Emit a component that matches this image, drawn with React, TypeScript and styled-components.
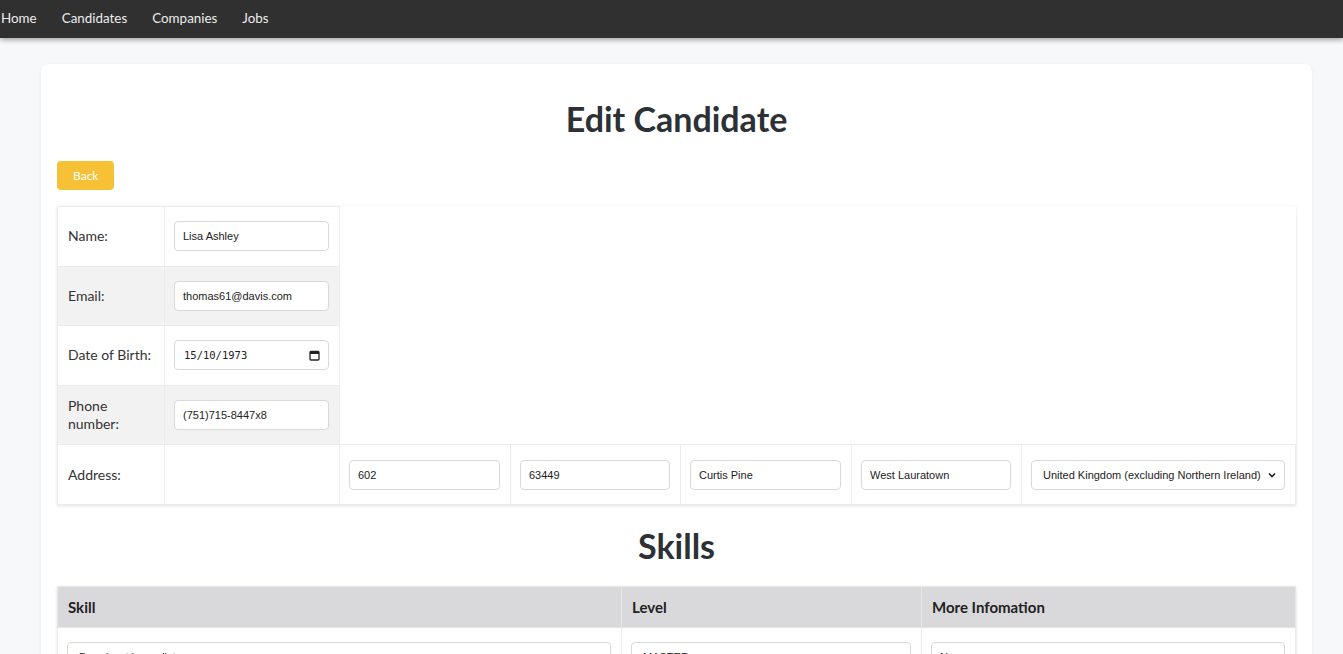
import React from "react";
import styled, { createGlobalStyle } from "styled-components";

const Global = createGlobalStyle`
  html, body { margin: 0; padding: 0; }
  body {
    background: #f7f8fa;
    font-family: Lato, "Open Sans", sans-serif;
    color: #333;
    overflow: hidden;
  }
  * { box-sizing: border-box; }
`;

const Nav = styled.nav`
  height: 38px;
  background: #303030;
  display: flex;
  align-items: center;
  gap: 25px;
  padding: 0 0 3px 1px;
  box-shadow: 0 2px 5px rgba(0, 0, 0, 0.35);
  position: relative;
  z-index: 1;
`;

const NavLink = styled.a`
  color: #ececec;
  font-size: 13.4px;
  text-decoration: none;
`;

const Card = styled.main`
  margin: 26px 31px 0 41px;
  background: #fff;
  border-radius: 8px;
  box-shadow: 0 1px 4px rgba(0, 0, 0, 0.05);
  padding: 16px 16px 40px;
`;

const Title = styled.h1`
  margin: 18px 0 22px;
  text-align: center;
  font-size: 34px;
  line-height: 41px;
  font-weight: 700;
  color: #2c3136;
`;

const BackButton = styled.button`
  height: 29px;
  padding: 0 16px;
  border: none;
  border-radius: 4px;
  background: #f7c136;
  color: #fff;
  font-family: Lato, sans-serif;
  font-size: 12px;
  cursor: pointer;
  margin-bottom: 16px;
`;

const Table = styled.table`
  width: 100%;
  table-layout: fixed;
  border-collapse: collapse;
  background: #fff;
  box-shadow: 0 1px 3px rgba(0, 0, 0, 0.12);
`;

const Row = styled.tr<{ $shade?: boolean }>`
  & > td {
    background: ${(p) => (p.$shade ? "#f2f2f2" : "#fff")};
  }
`;

const Cell = styled.td`
  border: 1px solid #ececec;
  padding: 11.3px 10px;
  font-size: 14px;
  line-height: 18px;
  color: #333;
  vertical-align: middle;
`;

const FieldCell = styled(Cell)`
  padding-left: 9px;
`;

const HeadCell = styled.th`
  background: #d9d9db;
  border: 1px solid #e6e6e6;
  padding: 0 10px;
  height: 41px;
  text-align: left;
  font-size: 15px;
  font-weight: 700;
  color: #222;
`;

const Input = styled.input`
  display: block;
  width: 100%;
  height: 30px;
  margin: 3px 0;
  border: 1px solid #d9d9d9;
  border-radius: 4px;
  padding: 0 8px;
  font-family: "Liberation Sans", Arial, sans-serif;
  font-size: 11px;
  color: #222;
  background: #fff;
  outline: none;
`;

const DateField = styled.div`
  width: 100%;
  height: 30px;
  margin: 3px 0;
  border: 1px solid #d9d9d9;
  border-radius: 4px;
  padding: 0 8px 0 9px;
  display: flex;
  align-items: center;
  justify-content: space-between;
  background: #fff;
`;

const DateText = styled.input`
  border: none;
  outline: none;
  padding: 0;
  width: 90px;
  font-family: "DejaVu Sans Mono", "Liberation Mono", monospace;
  font-size: 10.5px;
  color: #222;
  background: transparent;
`;

const SelectWrap = styled.div`
  position: relative;
  width: 100%;
  margin: 3px 0;
`;

const Select = styled.select`
  display: block;
  width: 100%;
  height: 30px;
  border: 1px solid #d9d9d9;
  border-radius: 4px;
  padding: 0 22px 0 11px;
  font-family: "Liberation Sans", Arial, sans-serif;
  font-size: 11px;
  color: #222;
  background: #fff;
  appearance: none;
  outline: none;
`;

const Chevron = styled.svg`
  position: absolute;
  right: 8px;
  top: 50%;
  transform: translateY(-50%);
  pointer-events: none;
`;

const SectionTitle = styled.h2`
  margin: 20px 0 20px;
  text-align: center;
  font-size: 34px;
  line-height: 41px;
  font-weight: 700;
  color: #2c3136;
`;

const ChevronIcon = () => (
  <Chevron width="10" height="10" viewBox="0 0 10 10">
    <path d="M2 3.5 L5 6.5 L8 3.5" fill="none" stroke="#222" strokeWidth="1.6" />
  </Chevron>
);

const CalendarIcon = () => (
  <svg width="11" height="11" viewBox="0 0 11 11">
    <rect x="1" y="1.5" width="9" height="8.5" rx="1" fill="none" stroke="#222" strokeWidth="1.3" />
    <rect x="1" y="1.5" width="9" height="2.5" fill="#222" />
  </svg>
);

const Dropdown = ({ value }: { value: string }) => (
  <SelectWrap>
    <Select defaultValue={value}>
      <option>{value}</option>
    </Select>
    <ChevronIcon />
  </SelectWrap>
);

export default function App() {
  return (
    <>
      <Global />
      <Nav>
        <NavLink href="#">Home</NavLink>
        <NavLink href="#">Candidates</NavLink>
        <NavLink href="#">Companies</NavLink>
        <NavLink href="#">Jobs</NavLink>
      </Nav>
      <Card>
        <Title>Edit Candidate</Title>
        <BackButton>Back</BackButton>
        <Table>
          <colgroup>
            <col style={{ width: 107 }} />
            <col style={{ width: 175 }} />
            <col style={{ width: 171 }} />
            <col style={{ width: 170 }} />
            <col style={{ width: 171 }} />
            <col style={{ width: 170 }} />
            <col />
          </colgroup>
          <tbody>
            <Row>
              <Cell>Name:</Cell>
              <FieldCell><Input defaultValue="Lisa Ashley" /></FieldCell>
            </Row>
            <Row $shade>
              <Cell>Email:</Cell>
              <FieldCell><Input defaultValue="thomas61@davis.com" /></FieldCell>
            </Row>
            <Row>
              <Cell>Date of Birth:</Cell>
              <FieldCell>
                <DateField>
                  <DateText defaultValue="15/10/1973" />
                  <CalendarIcon />
                </DateField>
              </FieldCell>
            </Row>
            <Row $shade>
              <Cell>Phone number:</Cell>
              <FieldCell><Input defaultValue="(751)715-8447x8" /></FieldCell>
            </Row>
            <Row>
              <Cell>Address:</Cell>
              <Cell />
              <FieldCell><Input defaultValue="602" /></FieldCell>
              <FieldCell><Input defaultValue="63449" /></FieldCell>
              <FieldCell><Input defaultValue="Curtis Pine" /></FieldCell>
              <FieldCell><Input defaultValue="West Lauratown" /></FieldCell>
              <FieldCell><Dropdown value="United Kingdom (excluding Northern Ireland)" /></FieldCell>
            </Row>
          </tbody>
        </Table>
        <SectionTitle>Skills</SectionTitle>
        <Table>
          <colgroup>
            <col style={{ width: 564 }} />
            <col style={{ width: 300 }} />
            <col />
          </colgroup>
          <thead>
            <tr>
              <HeadCell>Skill</HeadCell>
              <HeadCell>Level</HeadCell>
              <HeadCell>More Infomation</HeadCell>
            </tr>
          </thead>
          <tbody>
            <Row>
              <FieldCell><Dropdown value="Broadcast journalist" /></FieldCell>
              <FieldCell><Dropdown value="MASTER" /></FieldCell>
              <FieldCell><Input defaultValue="No" /></FieldCell>
            </Row>
          </tbody>
        </Table>
      </Card>
    </>
  );
}
